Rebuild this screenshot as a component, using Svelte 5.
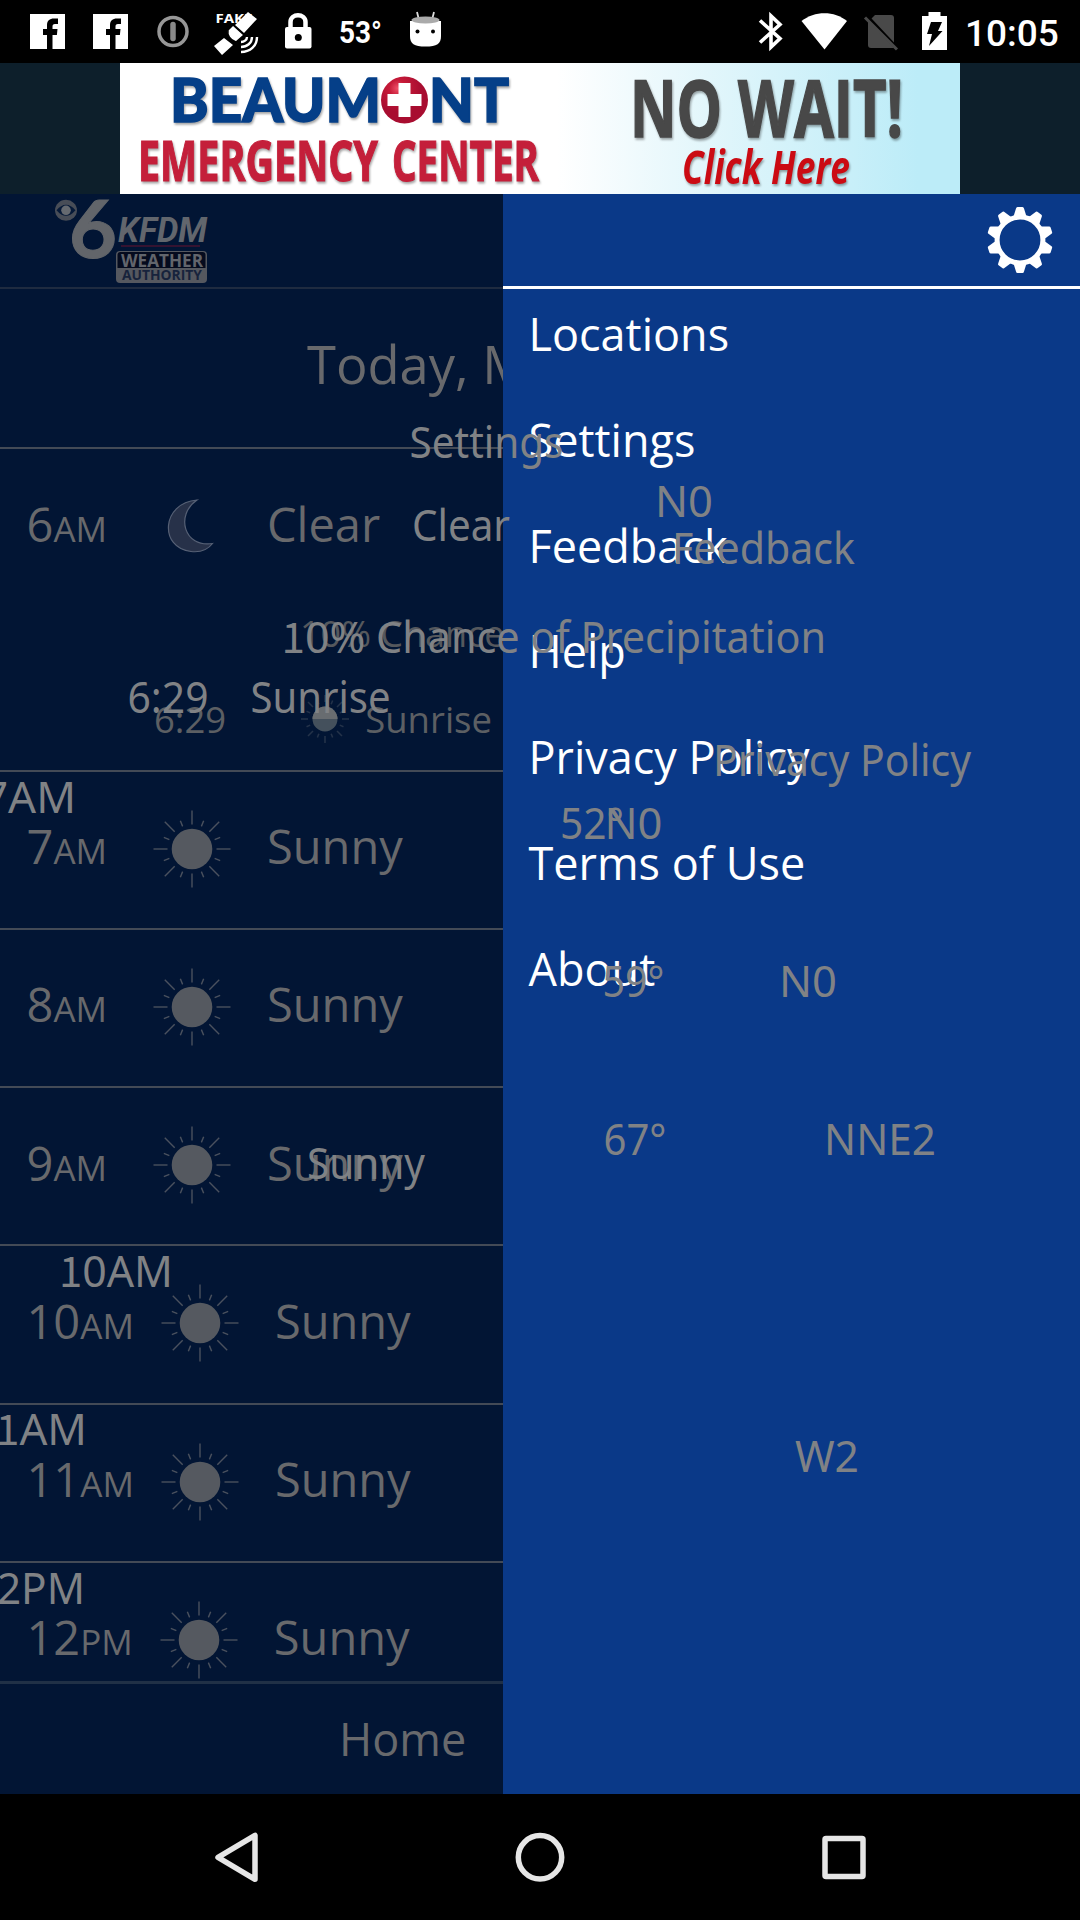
<script>
  const menu = ['Locations', 'Settings', 'Feedback', 'Help', 'Privacy Policy', 'Terms of Use', 'About'];

  const hours = [
    { hour: '7', half: 'AM' },
    { hour: '8', half: 'AM' },
    { hour: '9', half: 'AM' },
    { hour: '10', half: 'AM' },
    { hour: '11', half: 'AM' },
    { hour: '12', half: 'PM' }
  ];

  // Floating labels: baseline origin, advance width, optional footed numeral prefix
  const ghosts = [
    { x: 409.5, y: 458, w: 154, t: 'Settings' },
    { x: 412, y: 540.5, w: 98, t: 'Clear' },
    { x: 655, y: 516.5, w: 58, t: 'N0' },
    { x: 672, y: 563.5, w: 183, t: 'Feedback' },
    { x: 281.5, y: 653, w: 84, one: '1', t: '0%' },
    { x: 376, y: 653, w: 450, t: 'Chance of Precipitation' },
    { x: 127.5, y: 713, w: 81, t: '6:29' },
    { x: 250.5, y: 713, w: 140, t: 'Sunrise' },
    { x: -17, y: 813, w: 93, t: '7AM' },
    { x: 713, y: 775.5, w: 258, t: 'Privacy Policy' },
    { x: 560, y: 839, w: 64, t: '52°' },
    { x: 604.5, y: 839, w: 58, t: 'N0' },
    { x: 602.5, y: 996.5, w: 62, t: '59°' },
    { x: 779, y: 996.5, w: 58, t: 'N0' },
    { x: 603.5, y: 1155, w: 63, t: '67°' },
    { x: 824, y: 1155, w: 112, t: 'NNE2' },
    { x: 307, y: 1179, w: 118, t: 'Sunny' },
    { x: 59, y: 1287, w: 114, one: '1', t: '0AM' },
    { x: -28, y: 1445, w: 115, one: '11', t: 'AM' },
    { x: -26, y: 1604, w: 111, one: '1', t: '2PM' },
    { x: 795, y: 1472, w: 64, t: 'W2' }
  ];

  const teeth = Array.from({ length: 10 }, (_, i) => i * 36);
  const rays = Array.from({ length: 8 }, (_, i) => i * 45);
  const shortRays = [22.5, 67.5, 112.5, 157.5, 202.5, 247.5, 292.5, 337.5];
</script>

<div class="screen">
  <header class="status">
    <svg class="notifications" width="460" height="63" viewBox="0 0 460 63">
      {#each [30, 93] as x}
        <g transform="translate({x} 14)">
          <rect width="35" height="35" fill="#fff" />
          <path d="M17 35V21h-4v-6h4v-3.500c0-5 2.500-7 7-7h4v5.500h-3c-2 0-2.500 1-2.500 2.500v2.500h5l-.6 6h-4.400v14z" fill="#000" />
        </g>
      {/each}
      <circle cx="173" cy="31.500" r="14" fill="none" stroke="#979797" stroke-width="3.500" />
      <path d="M173 24.500v14" stroke="#8a8a8a" stroke-width="5.500" stroke-linecap="round" />
      <text class="fake" x="215.500" y="23" textLength="37" lengthAdjust="spacingAndGlyphs">FAKE</text>
      <g fill="#fff">
        <path d="M248 12l9 7-13 14-9-8zM224 38l9 7-11 10-8-9z" />
        <path d="M233 25l-5 5c-1 5 2 10 8 12l8-7z" stroke="#000" stroke-width="1.500" />
      </g>
      <path d="M241 42c3 0 6-2 6-5M241 47c6 0 11-4 11-10M241 52c9 0 16-6 16-15" fill="none" stroke="#fff" stroke-width="2.400" />
      <path d="M290.500 29v-7c0-9 15-9 15 0v7" fill="none" stroke="#fff" stroke-width="4.500" />
      <rect x="285" y="27" width="26.500" height="21.500" rx="2" fill="#fff" />
      <circle cx="298.300" cy="37.500" r="3.500" fill="#000" />
      <text class="temp" x="339" y="42.500" textLength="43" lengthAdjust="spacingAndGlyphs">53°</text>
      <path d="M419 20l-2-8M432 20l2-8" stroke="#ddd" stroke-width="1.800" />
      <path d="M410 21h31v15c0 8-4 10.500-15.500 10.500S410 44 410 36z" fill="#fff" />
      <ellipse cx="425.500" cy="20" rx="14" ry="3.500" fill="#aaa" />
      <circle cx="417.500" cy="31.500" r="2" /><circle cx="433" cy="31.500" r="2" />
    </svg>
    <svg class="system" width="200" height="63" viewBox="755 0 200 63">
      <path d="M760 20.500l20 18-9 8.500V16l9 8.500-20 18" fill="none" stroke="#fff" stroke-width="3.600" />
      <path d="M824.500 49.500L801.500 21c13-10.500 33-10.500 45.500 0z" fill="#fff" />
      <path d="M875 15h16c2 0 3 1 3 3v30H871c-2 0-3-1-3-3V22z" fill="#494949" />
      <path d="M868 17.500l29 31" stroke="#000" stroke-width="4" />
      <path d="M865 17.500l32 32" stroke="#494949" stroke-width="3" />
      <path d="M928.500 12h12v4h6.500v34h-25V16h6.500z" fill="#fff" />
      <path d="M931 22h11l-4 9h4.500l-13.500 15 3-12h-5z" fill="#000" />
    </svg>
    <span class="clock">10:05</span>
  </header>

  <section class="ad">
    <svg width="840" height="131" viewBox="120 63 840 131">
      <defs>
        <linearGradient id="sky"><stop offset=".52" stop-color="#fff" /><stop offset=".7" stop-color="#e2f6fb" /><stop offset=".95" stop-color="#bcecf8" /></linearGradient>
        <radialGradient id="ball" cx=".35" cy=".25"><stop offset="0" stop-color="#ef5068" /><stop offset=".35" stop-color="#c61a38" /><stop offset="1" stop-color="#a80d30" /></radialGradient>
      </defs>
      <rect x="120" y="63" width="840" height="131" fill="url(#sky)" />
      <g class="ad-text">
        <g class="brand">
          <text x="170" y="122" textLength="211" lengthAdjust="spacingAndGlyphs">BEAUM</text>
          <text x="429" y="122" textLength="80" lengthAdjust="spacingAndGlyphs">NT</text>
        </g>
        <g class="center">
          <text x="138" y="181" textLength="240" lengthAdjust="spacingAndGlyphs">EMERGENCY</text>
          <text x="392" y="181" textLength="147" lengthAdjust="spacingAndGlyphs">CENTER</text>
        </g>
        <g class="nowait">
          <text x="630" y="137" textLength="92" lengthAdjust="spacingAndGlyphs">NO</text>
          <text x="738" y="137" textLength="165" lengthAdjust="spacingAndGlyphs">WAIT!</text>
        </g>
        <text class="click" x="682" y="184" textLength="168" lengthAdjust="spacingAndGlyphs">Click Here</text>
      </g>
      <circle cx="404.500" cy="100" r="23.500" fill="url(#ball)" />
      <path d="M398.500 83h12v11h11v12h-11v11h-12v-11h-11v-12h11z" fill="#fff" />
    </svg>
  </section>

  <main class="app">
    <section class="forecast">
      <div class="brandbar">
        <svg width="170" height="93" viewBox="50 194 170 93">
          <ellipse cx="66" cy="210.300" rx="11" ry="10.500" fill="#484d57" />
          <path d="M56.500 210.300q9.500-11 19 0q-9.500 11-19 0z" fill="#071a38" />
          <circle cx="66" cy="210.300" r="4.800" fill="#666a70" />
          <text class="six" x="69" y="257.500" textLength="48" lengthAdjust="spacingAndGlyphs">6</text>
          <text class="kfdm" x="118" y="241.500" textLength="89" lengthAdjust="spacingAndGlyphs">KFDM</text>
          <path d="M121 246h79" stroke="#351331" stroke-width="2" />
          <rect x="116" y="251" width="91" height="32" rx="4" fill="#55585f" />
          <path d="M117.500 268v-13q0-3 3-3h82q3 0 3 3v13z" fill="#050b1e" />
          <text class="wx" x="121" y="266.500" textLength="82" lengthAdjust="spacingAndGlyphs">WEATHER</text>
          <text class="auth" x="122" y="280" textLength="80" lengthAdjust="spacingAndGlyphs">AUTHORITY</text>
        </svg>
      </div>
      <div class="date">Today, May 2</div>
      <div class="list">
        <article class="current">
          <div class="hour">
            <span class="time">6<small>AM</small></span>
            <svg class="moon" width="48" height="56" viewBox="0 0 48 56">
              <path d="M30 2C-6 5-8 50 24 53.500c9 1 17-2 21.500-8C17 50 8 17 30 2z" fill="#273149" stroke="#566075" stroke-width="1.200" />
            </svg>
            <span>Clear</span>
          </div>
          <div class="rain">10% Chance of Precipitation</div>
          <div class="rise">
            <span>6:29</span>
            <svg width="50" height="50" viewBox="-25 -25 50 50">
              <g stroke="#243249" stroke-width="1.600">
                {#each rays as a}<path d="M0-17v-7" transform="rotate({a})" />{/each}
                {#each shortRays as a}<path d="M0-16v-4" transform="rotate({a})" />{/each}
              </g>
              <circle r="12.500" fill="#44505c" />
              <path d="M-12.500 0a12.500 12.500 0 0 1 25 0z" fill="#686c70" />
            </svg>
            <span>Sunrise</span>
          </div>
        </article>
        {#each hours as h}
          <article class="hour row">
            <span class="time">{h.hour}<small>{h.half}</small></span>
            <svg class="sun" class:tight={h.hour.length > 1} width="80" height="80" viewBox="-40 -40 80 80">
              <circle r="20.300" fill="#555960" />
              <g stroke="#4a515e" stroke-width="1.400">
                {#each rays as a}<path d="M0-24.500v-14" transform="rotate({a})" />{/each}
                {#each shortRays as a}<path d="M0-24.500v-6" transform="rotate({a})" />{/each}
              </g>
            </svg>
            <span>Sunny</span>
          </article>
        {/each}
      </div>
      <footer class="home">Home</footer>
    </section>

    <aside class="drawer">
      <div class="drawer-head">
        <svg width="68" height="68" viewBox="-34 -34 68 68">
          <circle r="22.900" fill="none" stroke="#fff" stroke-width="5" />
          {#each teeth as a}<path d="M-6.500-23.500l2.500-8q.3-1.500 1.500-1.500h5q1.200 0 1.500 1.500l2.500 8z" fill="#fff" transform="rotate({a})" />{/each}
        </svg>
      </div>
      <nav>
        {#each menu as item}<a href="#menu">{item}</a>{/each}
      </nav>
    </aside>
  </main>

  <footer class="navbar">
    <svg width="1080" height="126" viewBox="0 1794 1080 126" fill="none" stroke="#e6e6e6" stroke-width="5.500" stroke-linejoin="round">
      <path d="M218 1857.300l37-22v44z" />
      <circle cx="540" cy="1857.300" r="21.700" />
      <rect x="825" y="1838.500" width="38" height="38" rx="1" />
    </svg>
  </footer>

  <svg class="ghosts" width="1080" height="1920" viewBox="0 0 1080 1920">
    {#each ghosts as g}
      <text x={g.x} y={g.y} textLength={g.w} lengthAdjust="spacingAndGlyphs">{#if g.one}<tspan class="footed">{g.one}</tspan>{/if}{g.t}</text>
    {/each}
  </svg>
</div>

<style>
  :global(body) { margin: 0; background: #000; }
  svg { display: block; flex: none; }
  .screen {
    position: relative;
    width: 1080px;
    height: 1920px;
    overflow: hidden;
    display: flex;
    flex-direction: column;
    background: #000;
    font-family: 'Open Sans', 'Noto Sans', sans-serif;
  }
  .status { height: 63px; display: flex; flex: none; }
  .system { margin-left: auto; }
  .clock {
    width: 125px;
    padding-top: 2px;
    box-sizing: border-box;
    text-indent: 10px;
    font: 500 37px/63px Roboto, sans-serif;
    color: #fff;
  }
  .fake { font: bold 13px 'Open Sans', sans-serif; fill: #fff; }
  .temp { font: bold 32px Roboto, sans-serif; fill: #fff; }

  .ad { height: 131px; flex: none; display: flex; justify-content: center; background: #0d1f2b; }
  .ad-text { filter: drop-shadow(1px 2px 1px rgba(0, 0, 0, .35)); font-family: 'Open Sans', sans-serif; font-weight: 700; }
  .brand { font: 900 60px Lato, sans-serif; fill: #053f88; stroke: #053f88; stroke-width: 1.5px; }
  .center { font-size: 56px; fill: #c41f3a; stroke: #c41f3a; stroke-width: 1.2px; }
  .nowait { font-size: 78px; fill: #484848; stroke: #484848; stroke-width: 1.5px; }
  .click { font-size: 46px; font-style: italic; fill: #cb0b13; }

  .app { height: 1600px; flex: none; display: flex; }
  .forecast {
    width: 502.5px;
    flex: none;
    overflow: hidden;
    display: flex;
    flex-direction: column;
    background: #021534;
    color: #68696c;
    white-space: nowrap;
  }
  .brandbar { height: 93px; padding-left: 50px; border-bottom: 2px solid #1f2b40; flex: none; }
  .six { font: bold 80px Lato, sans-serif; fill: #62656a; stroke: #62656a; stroke-width: 1px; }
  .kfdm { font: italic bold 35px Roboto, sans-serif; fill: #62666d; }
  .wx { font: bold 18px 'Open Sans', sans-serif; fill: #62656c; }
  .auth { font: bold 15px 'Open Sans', sans-serif; fill: #17233c; }
  .date { height: 158px; flex: none; padding-left: 307px; font-size: 52.5px; line-height: 150px; box-sizing: border-box; }
  .list { flex: 1; min-height: 0; overflow: hidden; }
  .current { height: 322.500px; box-sizing: border-box; border-top: 2px solid #434a56; }
  .hour { display: flex; align-items: center; height: 158.250px; padding-left: 26.5px; box-sizing: border-box; font-size: 47px; }
  .current .hour { height: 156px; }
  .row { border-top: 2px solid #434a56; }
  .hour span { margin-top: -7px; }
  small { font-size: 35px; }
  .sun { margin: -2px 35px 0 45px; }
  .sun.tight { margin-left: 26px; }
  .moon { margin: -3px 52px 0 60px; }
  .rain { margin-top: 4px; padding-left: 300px; font-size: 36px; line-height: 50px; color: #55585d; }
  .rise { display: flex; align-items: center; margin-top: 35px; padding-left: 154px; height: 50px; font-size: 36.5px; color: #5c5f63; }
  .rise svg { margin: 0 15px 0 74px; }
  .home { height: 110px; flex: none; border-top: 3px solid #203046; padding-left: 339px; font-size: 45px; line-height: 109px; }

  .drawer { flex: 1; background: #0a3988; color: #fff; }
  .drawer-head { height: 92px; box-sizing: content-box; border-bottom: 3px solid #fff; display: flex; justify-content: flex-end; align-items: center; padding-right: 26px; }
  nav { display: flex; flex-direction: column; padding-left: 26px; }
  nav a { height: 105.750px; line-height: 90px; font-size: 45px; color: inherit; text-decoration: none; }

  .navbar { height: 126px; flex: none; background: #000; }

  .ghosts { position: absolute; inset: 0; }
  .ghosts text { font: 43px 'Noto Sans', sans-serif; fill: #808285; white-space: pre; }
  .ghosts .footed { font-family: 'Noto Sans CJK SC', sans-serif; font-size: 42px; }
</style>
